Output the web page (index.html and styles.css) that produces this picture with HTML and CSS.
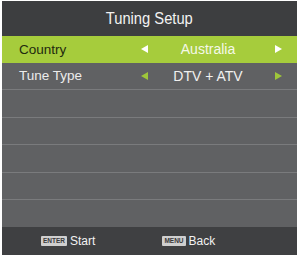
FILE: index.html
```html
<!DOCTYPE html>
<html lang="en">
<head>
    <meta charset="UTF-8">
    <title>Tuning Setup</title>
    <link rel="stylesheet" href="styles.css">
</head>
<body>
    <div class="panel">
        <div class="panel-title"><span>Tuning Setup</span></div>
        <div class="rows">
            <div class="row active">
                <span class="label">Country</span>
                <span class="arrow left"></span>
                <span class="value">Australia</span>
                <span class="arrow right"></span>
            </div>
            <div class="row">
                <span class="label">Tune Type</span>
                <span class="arrow left"></span>
                <span class="value">DTV + ATV</span>
                <span class="arrow right"></span>
            </div>
            <div class="row empty"></div>
            <div class="row empty"></div>
            <div class="row empty"></div>
            <div class="row empty"></div>
            <div class="row empty"></div>
        </div>
        <div class="panel-footer">
            <div class="hint hint-start"><span class="key">ENTER</span>Start</div>
            <div class="hint hint-back"><span class="key">MENU</span>Back</div>
        </div>
    </div>
</body>
</html>
```
FILE: styles.css
```css
body {
    margin: 0;
    background-color: #fff;
    font-family: "Liberation Sans", Arial, sans-serif;
}
.panel {
    margin: 1px 3px 3px 2px;
    width: 295px;
    height: 254px;
    display: flex;
    flex-direction: column;
    background-color: #606163;
}
.panel-title {
    height: 35px;
    flex-shrink: 0;
    background-color: #3d3e40;
    color: #f2f2f2;
    display: flex;
    align-items: center;
    justify-content: center;
    font-size: 16px;
}
.panel-title span {
    display: inline-block;
    transform: scaleX(0.92);
}
.rows {
    flex-grow: 1;
    display: flex;
    flex-direction: column;
}
.row {
    flex: 1;
    display: grid;
    grid-template-columns: 122px 6px 122px 6px 6px;
    align-items: center;
    padding-left: 17px;
    color: #ececec;
    font-size: 13.5px;
}
.row.empty {
    border-top: 1px solid #7a7b7d;
}
.row.active {
    background-color: #a6cc3c;
    color: #1f2a0f;
}
.value {
    text-align: center;
    font-size: 14px;
    color: #f0f0f0;
}
.row.active .value {
    color: #f4f8e8;
}
.arrow {
    width: 0;
    height: 0;
    border-top: 4px solid transparent;
    border-bottom: 4px solid transparent;
}
.arrow.left {
    border-right: 7px solid #9ec63a;
}
.arrow.right {
    grid-column: 5;
    border-left: 7px solid #9ec63a;
}
.row.active .arrow.left {
    border-right-color: #fff;
}
.row.active .arrow.right {
    border-left-color: #fff;
}
.panel-footer {
    height: 28px;
    flex-shrink: 0;
    background-color: #3f4042;
    color: #f2f2f2;
    font-size: 12px;
    display: flex;
    align-items: center;
}
.hint {
    display: flex;
    align-items: center;
}
.hint-start {
    margin-left: 39px;
}
.hint-back {
    margin-left: 67px;
}
.key {
    display: inline-block;
    background-color: #cfcfcf;
    color: #3a3a3a;
    font-size: 6.5px;
    font-weight: bold;
    line-height: 10px;
    padding: 0 2px;
    border-radius: 1px;
    margin-right: 3px;
}
```
